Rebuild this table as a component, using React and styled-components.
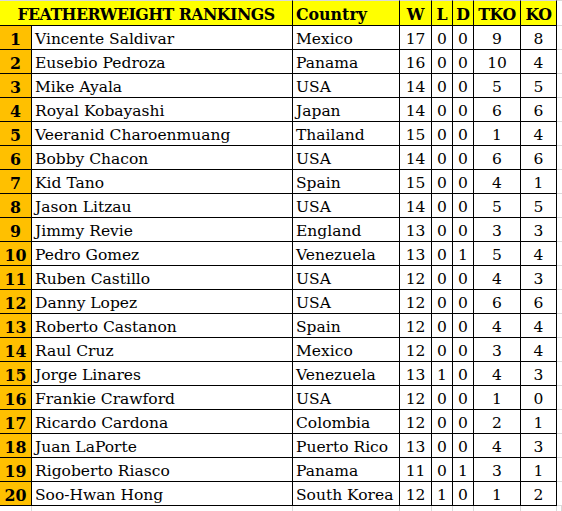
import React from "react";
import styled, { createGlobalStyle } from "styled-components";

const GlobalStyle = createGlobalStyle`
  html, body { margin: 0; padding: 0; background: #ffffff; }
  body { font-family: "DejaVu Serif", "Liberation Serif", serif; color: #000; }
`;

const COLS = "32px 261px 107px 32px 21px 21px 47px 36px 1fr";
const GRID = "#d9d9d9";

const Sheet = styled.div`
  display: flex;
  flex-direction: column;
  width: 562px;
  height: 511px;
  overflow: hidden;
`;

const Row = styled.div`
  display: grid;
  grid-template-columns: ${COLS};
  height: ${(p) => (p.$header ? "26px" : "24px")};
  flex: none;
`;

const Cell = styled.div`
  box-sizing: border-box;
  border-right: 1px solid #000;
  border-bottom: 1px solid #000;
  border-top: ${(p) => (p.$header ? `1px solid ${GRID}` : "none")};
  background: ${(p) => p.$bg || "#fff"};
  font-size: ${(p) => (p.$bold ? "15.8px" : "15.5px")};
  line-height: 19px;
  padding: 4px 0 0 ${(p) => (p.$align === "left" ? "3px" : "0")};
  font-weight: ${(p) => (p.$bold ? 700 : 400)};
  letter-spacing: ${(p) => p.$tight || "0"};
  text-align: ${(p) => p.$align || "center"};
  white-space: nowrap;
  overflow: hidden;
  grid-column: ${(p) => (p.$span ? `span ${p.$span}` : "auto")};
`;

const Filler = styled.div`
  box-sizing: border-box;
  border-bottom: 1px solid ${GRID};
  border-top: ${(p) => (p.$header ? `1px solid ${GRID}` : "none")};
`;

const GhostCell = styled.div`
  border-right: 1px solid ${GRID};
  box-sizing: border-box;
`;

const data = [
  ["Vincente Saldivar", "Mexico", 17, 0, 0, 9, 8],
  ["Eusebio Pedroza", "Panama", 16, 0, 0, 10, 4],
  ["Mike Ayala", "USA", 14, 0, 0, 5, 5],
  ["Royal Kobayashi", "Japan", 14, 0, 0, 6, 6],
  ["Veeranid Charoenmuang", "Thailand", 15, 0, 0, 1, 4],
  ["Bobby Chacon", "USA", 14, 0, 0, 6, 6],
  ["Kid Tano", "Spain", 15, 0, 0, 4, 1],
  ["Jason Litzau", "USA", 14, 0, 0, 5, 5],
  ["Jimmy Revie", "England", 13, 0, 0, 3, 3],
  ["Pedro Gomez", "Venezuela", 13, 0, 1, 5, 4],
  ["Ruben Castillo", "USA", 12, 0, 0, 4, 3],
  ["Danny Lopez", "USA", 12, 0, 0, 6, 6],
  ["Roberto Castanon", "Spain", 12, 0, 0, 4, 4],
  ["Raul Cruz", "Mexico", 12, 0, 0, 3, 4],
  ["Jorge Linares", "Venezuela", 13, 1, 0, 4, 3],
  ["Frankie Crawford", "USA", 12, 0, 0, 1, 0],
  ["Ricardo Cardona", "Colombia", 12, 0, 0, 2, 1],
  ["Juan LaPorte", "Puerto Rico", 13, 0, 0, 4, 3],
  ["Rigoberto Riasco", "Panama", 11, 0, 1, 3, 1],
  ["Soo-Hwan Hong", "South Korea", 12, 1, 0, 1, 2],
];

const YELLOW = "#ffff00";
const ORANGE = "#ffc000";

export default function App() {
  return (
    <>
      <GlobalStyle />
      <Sheet>
        <Row $header>
          <Cell $header $span={2} $bg={YELLOW} $bold $tight="-0.55px">
            FEATHERWEIGHT RANKINGS
          </Cell>
          <Cell $header $bg={YELLOW} $bold $align="left">
            Country
          </Cell>
          <Cell $header $bg={YELLOW} $bold>W</Cell>
          <Cell $header $bg={YELLOW} $bold>L</Cell>
          <Cell $header $bg={YELLOW} $bold>D</Cell>
          <Cell $header $bg={YELLOW} $bold $tight="-0.5px">TKO</Cell>
          <Cell $header $bg={YELLOW} $bold $tight="-0.5px">KO</Cell>
          <Filler $header />
        </Row>
        {data.map((r, i) => (
          <Row key={i}>
            <Cell $bg={ORANGE} $bold>{i + 1}</Cell>
            <Cell $align="left">{r[0]}</Cell>
            <Cell $align="left">{r[1]}</Cell>
            <Cell>{r[2]}</Cell>
            <Cell>{r[3]}</Cell>
            <Cell>{r[4]}</Cell>
            <Cell>{r[5]}</Cell>
            <Cell>{r[6]}</Cell>
            <Filler />
          </Row>
        ))}
        <Row>
          {Array.from({ length: 9 }).map((_, i) => (
            <GhostCell key={i} />
          ))}
        </Row>
      </Sheet>
    </>
  );
}
